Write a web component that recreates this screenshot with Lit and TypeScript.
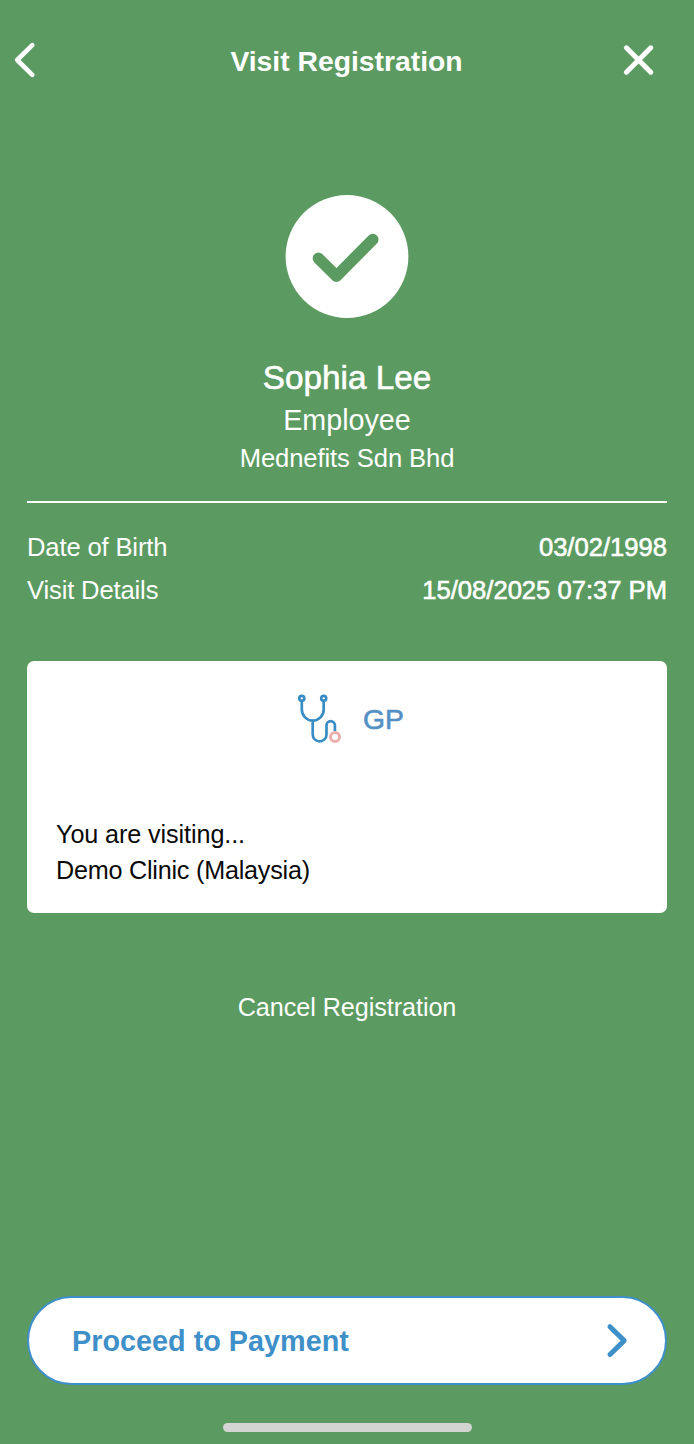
import { LitElement, html, css } from "lit";
import { customElement } from "lit/decorators.js";

@customElement("app-root")
export class AppRoot extends LitElement {
  static styles = css`
    :host {
      display: flex;
      flex-direction: column;
      box-sizing: border-box;
      width: 100%;
      height: 1444px;
      background: #5b9a60;
      color: #fff;
      font-family: "Liberation Sans", Arial, Helvetica, sans-serif;
      font-size: 25.6px;
      overflow: hidden;
    }
    svg { display: block; flex: none; }
    button {
      appearance: none;
      border: 0;
      padding: 0;
      margin: 0;
      background: none;
      color: inherit;
      font: inherit;
    }
    header {
      display: grid;
      grid-template-columns: 60px 1fr 60px;
      align-items: center;
      height: 120px;
      padding: 0 27px 0 0;
      box-sizing: border-box;
    }
    .header-side { display: flex; align-items: center; }
    .close { justify-content: flex-end; }
    h1 {
      margin: 0;
      padding: 2px 0 0 26px;
      text-align: center;
      font-size: 28.3px;
      line-height: 36px;
      font-weight: 700;
    }
    .badge { margin: 75px auto 0; }
    .person {
      display: flex;
      flex-direction: column;
      align-items: center;
      margin: 38px 27px 0;
      height: 147px;
      border-bottom: 2px solid #fff;
      box-sizing: border-box;
    }
    .medium { -webkit-text-stroke: 0.6px currentColor; }
    .name { font-size: 33.3px; line-height: 44px; }
    .role { font-size: 28.7px; line-height: 41px; }
    .company { font-size: 25.6px; line-height: 34px; letter-spacing: -0.1px; }
    .details { margin: 23px 27px 0; }
    .row {
      display: flex;
      justify-content: space-between;
      line-height: 43px;
    }
    .row-label { letter-spacing: -0.15px; }
    .card {
      margin: 49px 27px 0;
      height: 252px;
      box-sizing: border-box;
      border-radius: 7px;
      background: #fff;
      color: #0a0a0a;
      padding: 29px 28px 0;
    }
    .service {
      display: flex;
      justify-content: center;
      align-items: center;
      gap: 19px;
      height: 58px;
      padding-left: 6px;
      color: #5590c4;
      font-size: 28.3px;
    }
    .visiting {
      padding: 68px 0 0 1px;
      font-size: 25.2px;
      line-height: 36px;
      letter-spacing: -0.1px;
    }
    .clinic { letter-spacing: -0.23px; }
    .cancel {
      align-self: center;
      margin-top: 76px;
      font-size: 25.2px;
      line-height: 36px;
      letter-spacing: -0.06px;
    }
    .proceed {
      display: flex;
      align-items: center;
      justify-content: space-between;
      box-sizing: border-box;
      margin: auto 27px 0;
      height: 89px;
      border: 2px solid #3f8fc8;
      border-radius: 45px;
      background: #fff;
      color: #3f8fc8;
      padding: 0 36px 0 43px;
      font-size: 28.8px;
      font-weight: 700;
    }
    .proceed-label { padding-top: 2px; }
    .home {
      align-self: center;
      width: 249px;
      height: 9px;
      border-radius: 5px;
      background: #d3d5d3;
      margin: 38px 0 12px;
    }
  `;

  render() {
    return html`
      <header>
        <button class="header-side" aria-label="Back">
          <svg width="50" height="40" viewBox="0 40 50 40" fill="none" stroke="#fff" stroke-width="4.6" stroke-linecap="round" stroke-linejoin="round">
            <path d="M32.3 45.2 17.2 60l15.1 14.8" />
          </svg>
        </button>
        <h1>Visit Registration</h1>
        <button class="header-side close" aria-label="Close">
          <svg width="60" height="40" viewBox="607 40 60 40" fill="none" stroke="#fff" stroke-width="5" stroke-linecap="round">
            <path d="M626.4 47.8 650.8 72.2M650.8 47.8 626.4 72.2" />
          </svg>
        </button>
      </header>
      <svg class="badge" width="124" height="123" viewBox="285 195 124 123">
        <circle cx="347" cy="256.5" r="61.4" fill="#fff" />
        <path d="M318.4 258.3 336.4 276.2 372.8 239.5" fill="none" stroke="#5b9a60" stroke-width="11.5" stroke-linecap="round" stroke-linejoin="round" />
      </svg>
      <section class="person">
        <div class="name medium">Sophia Lee</div>
        <div class="role">Employee</div>
        <div class="company">Mednefits Sdn Bhd</div>
      </section>
      <section class="details">
        <div class="row"><span class="row-label">Date of Birth</span><span class="medium">03/02/1998</span></div>
        <div class="row"><span class="row-label">Visit Details</span><span class="medium">15/08/2025 07:37 PM</span></div>
      </section>
      <section class="card">
        <div class="service">
          <svg width="48" height="54" viewBox="296 692 48 54" fill="none" stroke="#378dc3" stroke-width="2.7">
            <circle cx="301.8" cy="698.3" r="2.5" />
            <circle cx="323.7" cy="698.3" r="2.5" />
            <path d="M301.8 701v8.5a10.95 11.2 0 0 0 21.9 0V701M312.7 720.8v13.7a6.9 6.9 0 0 0 13.8 0V725.3a4.2 4.2 0 0 1 8.4 0V731" />
            <circle cx="335" cy="737" r="4.5" stroke="#eaaeac" stroke-width="3" />
          </svg>
          <span class="medium">GP</span>
        </div>
        <div class="visiting">
          <div>You are visiting...</div>
          <div class="clinic">Demo Clinic (Malaysia)</div>
        </div>
      </section>
      <button class="cancel">Cancel Registration</button>
      <button class="proceed">
        <span class="proceed-label">Proceed to Payment</span>
        <svg width="24" height="36" viewBox="605 1323 24 36" fill="none" stroke="#3f8fc8" stroke-width="5" stroke-linecap="round" stroke-linejoin="round">
          <path d="M610 1326.7 624.2 1340.6 610 1354.5" />
        </svg>
      </button>
      <div class="home"></div>
    `;
  }
}
